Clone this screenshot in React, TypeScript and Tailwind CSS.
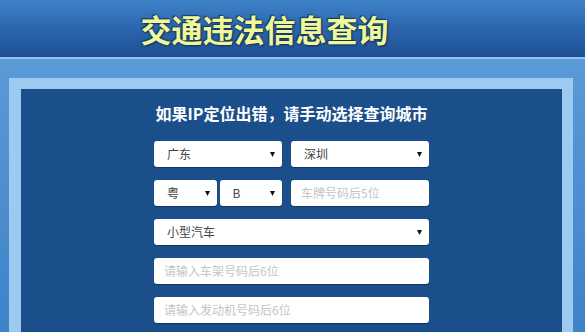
import React from 'react'

const CJK = { fontFamily: '"Noto Sans CJK SC", "Noto Sans", sans-serif' }

function Arrow() {
  return (
    <svg width="5" height="5" viewBox="0 0 5 5" className="shrink-0">
      <path d="M0 0 H5 L2.5 5 Z" fill="#111" />
    </svg>
  )
}

function Select({ label, className = '' }: { label: string; className?: string }) {
  return (
    <div className={`flex h-[26px] items-center justify-between rounded-[3px] bg-white pl-[13px] pr-[7px] text-[12px] text-[#444] shadow-[0_1px_1px_rgba(0,0,0,0.35)] ${className}`}>
      <span>{label}</span>
      <Arrow />
    </div>
  )
}

function Field({ placeholder, className = '' }: { placeholder: string; className?: string }) {
  return (
    <div className={`flex h-[26px] items-center rounded-[3px] bg-white px-[10px] text-[12px] text-[#c4c4c4] shadow-[0_1px_1px_rgba(0,0,0,0.35)] ${className}`}>
      {placeholder}
    </div>
  )
}

export default function App() {
  return (
    <div className="flex h-[332px] w-[585px] flex-col overflow-hidden bg-[#4a8dd2]" style={CJK}>
      {/* header */}
      <div className="flex h-[57px] shrink-0 items-center justify-center bg-gradient-to-b from-[#3f82c8] via-[#2b66ad] to-[#1e4f94] pr-[56px]">
        <h1
          className="text-[31px] font-bold leading-none text-[#eef79a]"
          style={{ textShadow: '0 0 2px #1a3a5c, 1px 1px 2px #16324f, -1px -1px 1px #1a3a5c' }}
        >
          交通违法信息查询
        </h1>
      </div>
      <div className="h-[2px] shrink-0 bg-[#8fc2ee]" />

      {/* body */}
      <div className="flex flex-1 flex-col bg-gradient-to-b from-[#5a9ad9] to-[#3f82c8] pl-[9px] pr-[12px] pt-[19px]">
        <div className="flex flex-1 flex-col border-l-[12px] border-r-[11px] border-t-[11px] border-[#9dcaf0] bg-[#1b4f8b]">
          <div className="flex flex-col items-center pt-[13px]">
            <p
              className="text-[16px] font-bold leading-[22px] text-white"
              style={{ fontFamily: '"Noto Sans CJK SC", "DejaVu Serif", serif' }}
            >
              如果IP定位出错，请手动选择查询城市
            </p>

            <div className="mt-[17px] flex w-[275px] flex-col gap-[13px]">
              <div className="flex gap-[9px]">
                <Select label="广东" className="w-[128px]" />
                <Select label="深圳" className="flex-1" />
              </div>
              <div className="flex gap-[9px]">
                <div className="flex w-[128px] gap-[3px]">
                  <Select label="粤" className="flex-1" />
                  <Select label="B" className="flex-1" />
                </div>
                <Field placeholder="车牌号码后5位" className="flex-1" />
              </div>
              <Select label="小型汽车" />
              <Field placeholder="请输入车架号码后6位" />
              <Field placeholder="请输入发动机号码后6位" />
            </div>
          </div>
        </div>
      </div>
    </div>
  )
}
